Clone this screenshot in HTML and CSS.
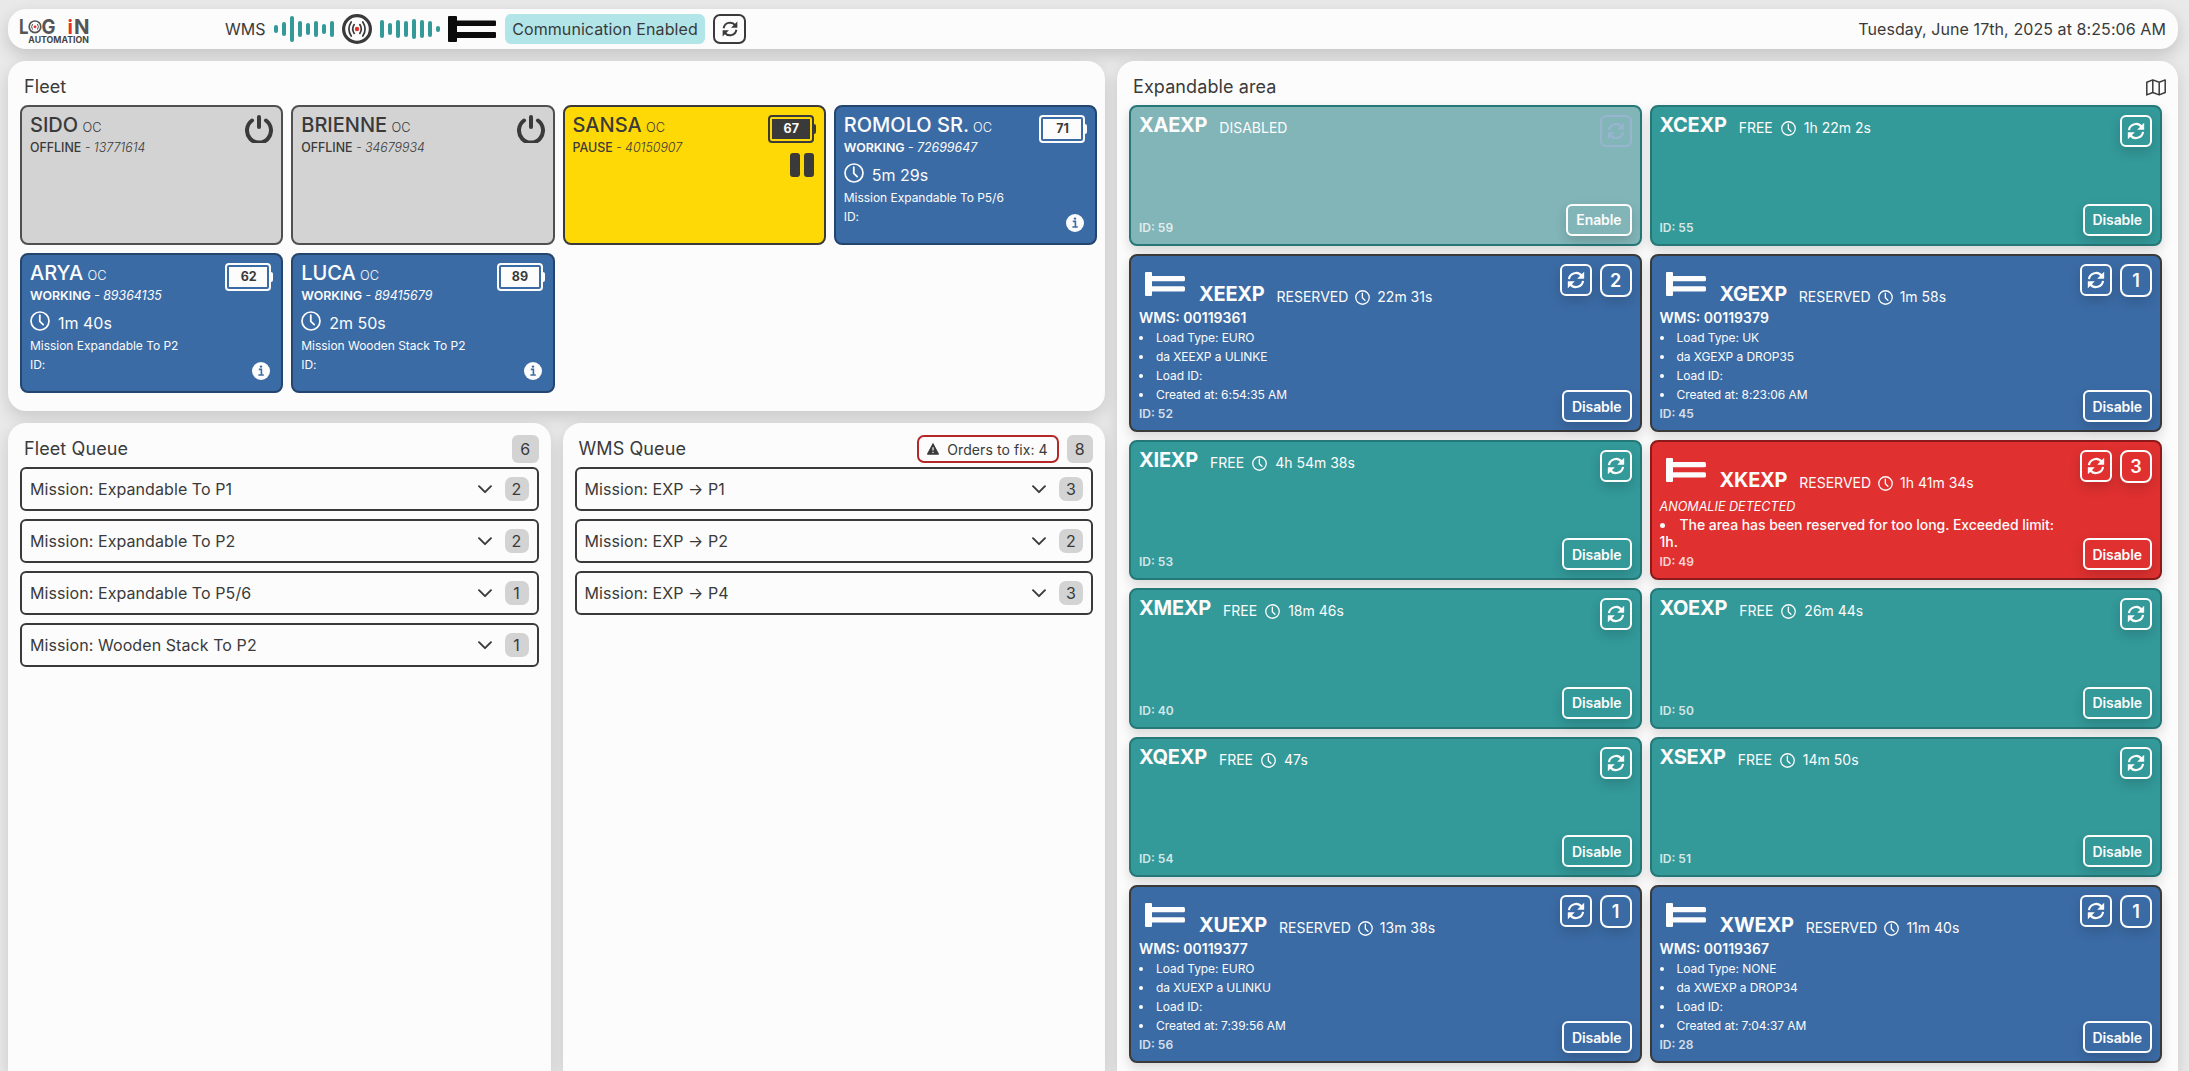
FILE: index.html
```html
<!DOCTYPE html>
<html lang="en">
<head>
    <meta charset="UTF-8">
    <meta name="viewport" content="width=device-width, initial-scale=1.0">
    <title>Log In Automation</title>
    <link rel="stylesheet" href="styles.css">
</head>
<body>
    <!-- shared icons -->
    <svg class="sprite" width="0" height="0">
        <symbol id="refresh" viewBox="0 0 24 24">
            <path d="M3.5 11A8.6 8.6 0 0 1 19 7.2M20.5 13A8.6 8.6 0 0 1 5 16.8" fill="none" stroke="currentColor" stroke-width="2.6"/>
            <path d="M21.8 2v8.4h-8.4zM2.2 22v-8.4h8.4z" fill="currentColor"/>
        </symbol>
        <symbol id="clock" viewBox="0 0 20 20">
            <circle cx="10" cy="10" r="9" fill="none" stroke="currentColor" stroke-width="1.7"/>
            <path d="M9.8 4.2v6.2l3.4 3.2" fill="none" stroke="currentColor" stroke-width="1.8" stroke-linecap="round"/>
        </symbol>
        <symbol id="power" viewBox="0 0 28 28">
            <path d="M7 5.5a12 12.2 0 1 0 14 0" fill="none" stroke="currentColor" stroke-width="4" stroke-linecap="round"/>
            <path d="M14 2v10" stroke="currentColor" stroke-width="4" stroke-linecap="round"/>
        </symbol>
        <symbol id="info" viewBox="0 0 18 18">
            <circle cx="9" cy="9" r="9" fill="#fcfcfc"/>
            <path d="M6.8 7.4h2.6v5.4M6.4 13h5.4" fill="none" stroke="#3b6ba5" stroke-width="1.6"/>
            <circle cx="9" cy="4.6" r="1.2" fill="#3b6ba5"/>
        </symbol>
        <symbol id="chevron" viewBox="0 0 14 9">
            <path d="M1 1.2l6 6 6-6" fill="none" stroke="currentColor" stroke-width="1.9" stroke-linecap="round" stroke-linejoin="round"/>
        </symbol>
        <symbol id="fork" viewBox="0 0 40 24">
            <rect x="0" y="0" width="7" height="24" rx="1"/>
            <rect x="6" y="4" width="34" height="5.2" rx="1.5"/>
            <rect x="6" y="14.2" width="34" height="5.2" rx="1.5"/>
        </symbol>
    </svg>

    <header class="topbar">
        <svg class="logo" viewBox="0 0 72 32">
            <text class="logo-top" x="-1" y="20.7" textLength="9.5" lengthAdjust="spacingAndGlyphs">L</text>
            <circle cx="15" cy="13.8" r="5.8" fill="none" stroke="#555" stroke-width="1.7"/>
            <path d="M12.6 11q-2 2.8 0 5.6M17.4 11q2 2.8 0 5.6" fill="none" stroke="#555" stroke-width="1"/>
            <circle cx="15" cy="13.8" r="1.4" fill="#e03030"/>
            <text class="logo-top" x="21.5" y="20.7" textLength="14" lengthAdjust="spacingAndGlyphs">G</text>
            <text class="logo-top logo-red" x="47.5" y="20.7">i</text>
            <text class="logo-top" x="54" y="20.7" textLength="15.5" lengthAdjust="spacingAndGlyphs">N</text>
            <text class="logo-sub" x="8.3" y="30.4" textLength="60.5" lengthAdjust="spacingAndGlyphs">AUTOMATION</text>
        </svg>
        <div class="comm">
            <span class="comm-label">WMS</span>
            <svg class="wave" width="60" height="30" viewBox="0 0 60 30">
                <rect x="0" y="11" width="4" height="8" rx="2"/>
                <rect x="8" y="8" width="4" height="14" rx="2"/>
                <rect x="16" y="2" width="4" height="26" rx="2"/>
                <rect x="24" y="7" width="4" height="16" rx="2"/>
                <rect x="32" y="9" width="4" height="12" rx="2"/>
                <rect x="40" y="7" width="4" height="16" rx="2"/>
                <rect x="48" y="10" width="4" height="10" rx="2"/>
                <rect x="56" y="7" width="4" height="16" rx="2"/>
            </svg>
            <svg width="30" height="30" viewBox="0 0 30 30" fill="none" stroke="#3a3a3a">
                <circle cx="15" cy="15" r="13.4" stroke-width="3.2"/>
                <path d="M9.2 8q-4.6 7 0 14M20.8 8q4.6 7 0 14M12.2 10.6q-3 4.4 0 8.8M17.8 10.6q3 4.4 0 8.8" stroke-width="1.7" stroke-linecap="round"/>
                <circle cx="15" cy="15" r="2.2" fill="#e03030" stroke="none"/>
            </svg>
            <svg class="wave" width="60" height="30" viewBox="0 0 60 30">
                <rect x="0" y="6" width="4" height="18" rx="2"/>
                <rect x="8" y="9" width="4" height="12" rx="2"/>
                <rect x="16" y="6" width="4" height="18" rx="2"/>
                <rect x="24" y="7" width="4" height="16" rx="2"/>
                <rect x="32" y="5" width="4" height="20" rx="2"/>
                <rect x="40" y="6" width="4" height="18" rx="2"/>
                <rect x="48" y="7" width="4" height="16" rx="2"/>
                <rect x="56" y="12" width="4" height="6" rx="2"/>
            </svg>
            <svg class="comm-fork" width="48" height="26" viewBox="0 0 48 26">
                <rect x="0" y="0" width="9" height="26" rx="1"/>
                <rect x="8" y="4.5" width="40" height="5.5" rx="1"/>
                <rect x="8" y="16" width="40" height="6" rx="1"/>
            </svg>
            <span class="comm-status">Communication Enabled</span>
            <button class="sync-btn"><svg width="18" height="18"><use href="#refresh"/></svg></button>
        </div>
        <div class="date">Tuesday, June 17th, 2025 at 8:25:06 AM</div>
    </header>

    <main class="layout">
        <div class="left">
            <section class="panel fleet">
                <div class="panel-head"><h2>Fleet</h2></div>
                <div class="fleet-grid">
                    <div class="robot offline">
                        <div class="robot-name">SIDO <small>OC</small></div>
                        <div class="robot-status">OFFLINE <i>- 13771614</i></div>
                        <div class="robot-side"><svg width="28" height="28"><use href="#power"/></svg></div>
                    </div>
                    <div class="robot offline">
                        <div class="robot-name">BRIENNE <small>OC</small></div>
                        <div class="robot-status">OFFLINE <i>- 34679934</i></div>
                        <div class="robot-side"><svg width="28" height="28"><use href="#power"/></svg></div>
                    </div>
                    <div class="robot paused">
                        <div class="robot-name">SANSA <small>OC</small></div>
                        <div class="robot-status">PAUSE <i>- 40150907</i></div>
                        <div class="robot-side">
                            <div class="battery"><span>67</span></div>
                            <div class="pause"></div>
                        </div>
                    </div>
                    <div class="robot working">
                        <div class="robot-name">ROMOLO SR. <small>OC</small></div>
                        <div class="robot-status">WORKING <i>- 72699647</i></div>
                        <div class="robot-time"><svg width="20" height="20"><use href="#clock"/></svg>5m 29s</div>
                        <div class="robot-mission">Mission Expandable To P5/6</div>
                        <div class="robot-mission">ID:</div>
                        <div class="robot-side"><div class="battery"><span>71</span></div></div>
                        <svg class="robot-info" width="18" height="18"><use href="#info"/></svg>
                    </div>
                    <div class="robot working">
                        <div class="robot-name">ARYA <small>OC</small></div>
                        <div class="robot-status">WORKING <i>- 89364135</i></div>
                        <div class="robot-time"><svg width="20" height="20"><use href="#clock"/></svg>1m 40s</div>
                        <div class="robot-mission">Mission Expandable To P2</div>
                        <div class="robot-mission">ID:</div>
                        <div class="robot-side"><div class="battery"><span>62</span></div></div>
                        <svg class="robot-info" width="18" height="18"><use href="#info"/></svg>
                    </div>
                    <div class="robot working">
                        <div class="robot-name">LUCA <small>OC</small></div>
                        <div class="robot-status">WORKING <i>- 89415679</i></div>
                        <div class="robot-time"><svg width="20" height="20"><use href="#clock"/></svg>2m 50s</div>
                        <div class="robot-mission">Mission Wooden Stack To P2</div>
                        <div class="robot-mission">ID:</div>
                        <div class="robot-side"><div class="battery"><span>89</span></div></div>
                        <svg class="robot-info" width="18" height="18"><use href="#info"/></svg>
                    </div>
                </div>
            </section>

            <div class="queues">
                <section class="panel queue">
                    <div class="panel-head"><h2>Fleet Queue</h2><span class="total">6</span></div>
                    <div class="missions">
                        <div class="mission"><span>Mission: Expandable To P1</span><svg width="14" height="9"><use href="#chevron"/></svg><b>2</b></div>
                        <div class="mission"><span>Mission: Expandable To P2</span><svg width="14" height="9"><use href="#chevron"/></svg><b>2</b></div>
                        <div class="mission"><span>Mission: Expandable To P5/6</span><svg width="14" height="9"><use href="#chevron"/></svg><b>1</b></div>
                        <div class="mission"><span>Mission: Wooden Stack To P2</span><svg width="14" height="9"><use href="#chevron"/></svg><b>1</b></div>
                    </div>
                </section>
                <section class="panel queue">
                    <div class="panel-head">
                        <h2>WMS Queue</h2>
                        <button class="fix-btn">
                            <svg width="12" height="12" viewBox="0 0 12 12"><path d="M6 .6 11.6 11.2H.4z" fill="#3a3a3a" stroke="#3a3a3a" stroke-linejoin="round"/><path d="M6 4.2v3.4M6 8.8v1.3" stroke="#fcfcfc" stroke-width="1.2"/></svg>
                            Orders to fix: 4
                        </button>
                        <span class="total">8</span>
                    </div>
                    <div class="missions">
                        <div class="mission"><span>Mission: EXP → P1</span><svg width="14" height="9"><use href="#chevron"/></svg><b>3</b></div>
                        <div class="mission"><span>Mission: EXP → P2</span><svg width="14" height="9"><use href="#chevron"/></svg><b>2</b></div>
                        <div class="mission"><span>Mission: EXP → P4</span><svg width="14" height="9"><use href="#chevron"/></svg><b>3</b></div>
                    </div>
                </section>
            </div>
        </div>

        <section class="panel areas">
            <div class="panel-head">
                <h2>Expandable area</h2>
                <svg class="map" width="20" height="17" viewBox="0 0 20 17" fill="none" stroke="#3a3a3a" stroke-width="1.5" stroke-linejoin="round"><path d="M.8 3.2 6.8.9l6.4 2.3 6-2.3v12.6l-6 2.4-6.4-2.4-6 2.4zM6.8.9v12.6M13.2 3.2v12.7"/></svg>
            </div>
            <div class="area-grid">
                <div class="area disabled">
                    <div class="area-head"><strong>XAEXP</strong><span>DISABLED</span></div>
                    <div class="area-id">ID: 59</div>
                    <div class="area-tools"><button class="icon-btn"><svg width="20" height="20"><use href="#refresh"/></svg></button></div>
                    <button class="toggle">Enable</button>
                </div>
                <div class="area free">
                    <div class="area-head"><strong>XCEXP</strong><span>FREE</span><svg width="15" height="15"><use href="#clock"/></svg><span>1h 22m 2s</span></div>
                    <div class="area-id">ID: 55</div>
                    <div class="area-tools"><button class="icon-btn"><svg width="20" height="20"><use href="#refresh"/></svg></button></div>
                    <button class="toggle">Disable</button>
                </div>

                <div class="area reserved">
                    <div class="area-head"><svg class="fork" width="40" height="24"><use href="#fork"/></svg><strong>XEEXP</strong><span>RESERVED</span><svg width="15" height="15"><use href="#clock"/></svg><span>22m 31s</span></div>
                    <div class="area-wms">WMS: 00119361</div>
                    <ul>
                        <li>Load Type: EURO</li>
                        <li>da XEEXP a ULINKE</li>
                        <li>Load ID:</li>
                        <li>Created at: 6:54:35 AM</li>
                    </ul>
                    <div class="area-id">ID: 52</div>
                    <div class="area-tools"><button class="icon-btn"><svg width="20" height="20"><use href="#refresh"/></svg></button><button class="count">2</button></div>
                    <button class="toggle">Disable</button>
                </div>
                <div class="area reserved">
                    <div class="area-head"><svg class="fork" width="40" height="24"><use href="#fork"/></svg><strong>XGEXP</strong><span>RESERVED</span><svg width="15" height="15"><use href="#clock"/></svg><span>1m 58s</span></div>
                    <div class="area-wms">WMS: 00119379</div>
                    <ul>
                        <li>Load Type: UK</li>
                        <li>da XGEXP a DROP35</li>
                        <li>Load ID:</li>
                        <li>Created at: 8:23:06 AM</li>
                    </ul>
                    <div class="area-id">ID: 45</div>
                    <div class="area-tools"><button class="icon-btn"><svg width="20" height="20"><use href="#refresh"/></svg></button><button class="count">1</button></div>
                    <button class="toggle">Disable</button>
                </div>

                <div class="area free">
                    <div class="area-head"><strong>XIEXP</strong><span>FREE</span><svg width="15" height="15"><use href="#clock"/></svg><span>4h 54m 38s</span></div>
                    <div class="area-id">ID: 53</div>
                    <div class="area-tools"><button class="icon-btn"><svg width="20" height="20"><use href="#refresh"/></svg></button></div>
                    <button class="toggle">Disable</button>
                </div>
                <div class="area anomaly">
                    <div class="area-head"><svg class="fork" width="40" height="24"><use href="#fork"/></svg><strong>XKEXP</strong><span>RESERVED</span><svg width="15" height="15"><use href="#clock"/></svg><span>1h 41m 34s</span></div>
                    <div class="anomaly-title">ANOMALIE DETECTED</div>
                    <div class="anomaly-text">The area has been reserved for too long. Exceeded limit: 1h.</div>
                    <div class="area-id">ID: 49</div>
                    <div class="area-tools"><button class="icon-btn"><svg width="20" height="20"><use href="#refresh"/></svg></button><button class="count">3</button></div>
                    <button class="toggle">Disable</button>
                </div>

                <div class="area free">
                    <div class="area-head"><strong>XMEXP</strong><span>FREE</span><svg width="15" height="15"><use href="#clock"/></svg><span>18m 46s</span></div>
                    <div class="area-id">ID: 40</div>
                    <div class="area-tools"><button class="icon-btn"><svg width="20" height="20"><use href="#refresh"/></svg></button></div>
                    <button class="toggle">Disable</button>
                </div>
                <div class="area free">
                    <div class="area-head"><strong>XOEXP</strong><span>FREE</span><svg width="15" height="15"><use href="#clock"/></svg><span>26m 44s</span></div>
                    <div class="area-id">ID: 50</div>
                    <div class="area-tools"><button class="icon-btn"><svg width="20" height="20"><use href="#refresh"/></svg></button></div>
                    <button class="toggle">Disable</button>
                </div>

                <div class="area free">
                    <div class="area-head"><strong>XQEXP</strong><span>FREE</span><svg width="15" height="15"><use href="#clock"/></svg><span>47s</span></div>
                    <div class="area-id">ID: 54</div>
                    <div class="area-tools"><button class="icon-btn"><svg width="20" height="20"><use href="#refresh"/></svg></button></div>
                    <button class="toggle">Disable</button>
                </div>
                <div class="area free">
                    <div class="area-head"><strong>XSEXP</strong><span>FREE</span><svg width="15" height="15"><use href="#clock"/></svg><span>14m 50s</span></div>
                    <div class="area-id">ID: 51</div>
                    <div class="area-tools"><button class="icon-btn"><svg width="20" height="20"><use href="#refresh"/></svg></button></div>
                    <button class="toggle">Disable</button>
                </div>

                <div class="area reserved">
                    <div class="area-head"><svg class="fork" width="40" height="24"><use href="#fork"/></svg><strong>XUEXP</strong><span>RESERVED</span><svg width="15" height="15"><use href="#clock"/></svg><span>13m 38s</span></div>
                    <div class="area-wms">WMS: 00119377</div>
                    <ul>
                        <li>Load Type: EURO</li>
                        <li>da XUEXP a ULINKU</li>
                        <li>Load ID:</li>
                        <li>Created at: 7:39:56 AM</li>
                    </ul>
                    <div class="area-id">ID: 56</div>
                    <div class="area-tools"><button class="icon-btn"><svg width="20" height="20"><use href="#refresh"/></svg></button><button class="count">1</button></div>
                    <button class="toggle">Disable</button>
                </div>
                <div class="area reserved">
                    <div class="area-head"><svg class="fork" width="40" height="24"><use href="#fork"/></svg><strong>XWEXP</strong><span>RESERVED</span><svg width="15" height="15"><use href="#clock"/></svg><span>11m 40s</span></div>
                    <div class="area-wms">WMS: 00119367</div>
                    <ul>
                        <li>Load Type: NONE</li>
                        <li>da XWEXP a DROP34</li>
                        <li>Load ID:</li>
                        <li>Created at: 7:04:37 AM</li>
                    </ul>
                    <div class="area-id">ID: 28</div>
                    <div class="area-tools"><button class="icon-btn"><svg width="20" height="20"><use href="#refresh"/></svg></button><button class="count">1</button></div>
                    <button class="toggle">Disable</button>
                </div>
            </div>
        </section>
    </main>
</body>
</html>
```
FILE: styles.css
```css
* {
    box-sizing: border-box;
}
body {
    margin: 0;
    padding: 9px 11px 0 8px;
    height: 100vh;
    overflow: hidden;
    display: flex;
    flex-direction: column;
    gap: 12px;
    background-color: #e9e9e9;
    color: #3a3a3a;
    font-family: Inter, "Liberation Sans", sans-serif;
    font-size: 16px;
}
h2 {
    margin: 0;
    font-size: 18px;
    font-weight: 400;
    letter-spacing: 0.1px;
}
button {
    font-family: inherit;
    color: inherit;
    background: none;
    padding: 0;
    display: flex;
    align-items: center;
    justify-content: center;
}
svg {
    flex-shrink: 0;
}
.sprite {
    position: absolute;
}

/* top bar */
.topbar {
    height: 40px;
    flex-shrink: 0;
    display: flex;
    align-items: center;
    padding: 0 12px;
    border-radius: 18px;
    background-color: #fcfcfc;
    box-shadow: 0 6px 16px rgba(0, 0, 0, 0.16);
}
.logo {
    width: 72px;
    height: 32px;
    overflow: visible;
}
.logo-top {
    font-size: 20px;
    font-weight: 700;
    fill: #555;
}
.logo-red {
    fill: #e03030;
}
.logo-sub {
    font-size: 8.5px;
    font-weight: 700;
    fill: #444;
}
.comm {
    display: flex;
    align-items: center;
    gap: 8px;
    margin-left: 133px;
}
.comm-label {
    width: 41px;
}
.wave {
    fill: #339999;
}
.comm-fork {
    fill: #0c0c0c;
}
.comm-status {
    width: 200px;
    height: 30px;
    line-height: 30px;
    margin-left: 1px;
    text-align: center;
    white-space: nowrap;
    letter-spacing: 0.08px;
    border-radius: 6px;
    background-color: #b2e5e7;
}
.sync-btn {
    width: 33px;
    height: 30px;
    border: 2px solid #3a3a3a;
    border-radius: 7px;
}
.date {
    margin-left: auto;
    letter-spacing: 0.08px;
}

/* panels */
.layout {
    flex: 1;
    min-height: 0;
    display: flex;
    gap: 12px;
}
.left {
    width: 1097px;
    display: flex;
    flex-direction: column;
    gap: 12px;
}
.panel {
    background-color: #fcfcfc;
    border-radius: 18px;
    box-shadow: 0 6px 16px rgba(0, 0, 0, 0.14);
}
.panel-head {
    height: 44px;
    display: flex;
    align-items: center;
    gap: 8px;
    padding: 8px 0 0 4px;
}
.panel-head h2 {
    flex: 1;
    padding-bottom: 1px;
}

/* fleet */
.fleet {
    height: 350px;
    padding: 0 8px 0 12px;
}
.fleet-grid {
    display: grid;
    grid-template-columns: repeat(4, 1fr);
    grid-auto-rows: 140px;
    gap: 8px;
}
.robot {
    position: relative;
    padding: 6px 8px;
    border: 2px solid;
    border-radius: 8px;
}
.robot.offline {
    background-color: #d3d3d3;
    border-color: #505050;
}
.robot.paused {
    background-color: #ffd905;
    border-color: #3a3a3a;
}
.robot.working {
    background-color: #3b6ba5;
    border-color: #24456e;
    color: #fcfcfc;
}
.robot-name {
    font-size: 20px;
    line-height: 24px;
    font-weight: 500;
}
.robot-name small {
    margin-left: -1px;
    font-size: 12.8px;
    font-weight: 300;
}
.robot-status {
    font-size: 12.4px;
    line-height: 16px;
    font-weight: 500;
}
.working .robot-status {
    font-weight: 600;
}
.robot-status i {
    font-weight: 300;
}
.working .robot-status i {
    font-weight: 400;
}
.robot-time {
    display: flex;
    gap: 8px;
    margin-top: 7px;
    height: 26px;
    line-height: 24px;
}
.robot-mission {
    font-size: 12px;
    line-height: 19px;
    letter-spacing: -0.03px;
}
.robot-mission:nth-child(4) {
    margin-top: -1px;
}
.robot-side {
    position: absolute;
    top: 8px;
    right: 8px;
    display: flex;
    flex-direction: column;
    align-items: flex-end;
    gap: 10px;
}
.battery {
    position: relative;
    width: 46px;
    height: 28px;
    margin-right: 2px;
    padding: 2px;
    border: 2px solid #fcfcfc;
    border-radius: 4px;
}
.battery::after {
    content: "";
    position: absolute;
    right: -4px;
    top: 7px;
    width: 2px;
    height: 10px;
    border-radius: 0 2px 2px 0;
    background-color: #fcfcfc;
}
.battery span {
    display: block;
    height: 20px;
    line-height: 20px;
    padding-left: 1px;
    text-align: center;
    font-size: 12.5px;
    font-weight: 700;
    color: #3a3a3a;
    background-color: #fcfcfc;
}
.paused .battery {
    border-color: #3a3a3a;
}
.paused .battery::after {
    background-color: #3a3a3a;
}
.paused .battery span {
    color: #fcfcfc;
    background-color: #3a3a3a;
}
.pause {
    width: 24px;
    height: 24px;
    margin-right: 2px;
    display: flex;
    justify-content: space-between;
}
.pause::before,
.pause::after {
    content: "";
    width: 10px;
    border-radius: 3px;
    background-color: #3a3a3a;
}
.robot-info {
    position: absolute;
    right: 11px;
    bottom: 11px;
}

/* queues */
.queues {
    flex: 1;
    display: flex;
    gap: 12px;
}
.queue {
    flex: 1;
    padding: 0 12px;
    border-radius: 18px 18px 0 0;
}
.total {
    width: 26.5px;
    height: 28px;
    line-height: 28px;
    text-align: center;
    border-radius: 6px;
    background-color: #d3d3d3;
}
.fix-btn {
    gap: 8px;
    width: 142px;
    height: 28px;
    border: 2px solid #b52828;
    border-radius: 7px;
    font-size: 14px;
    letter-spacing: 0.08px;
}
.missions {
    display: flex;
    flex-direction: column;
    gap: 8px;
}
.mission {
    height: 44px;
    display: flex;
    align-items: center;
    padding: 0 8px;
    border: 2px solid #3a3a3a;
    border-radius: 6px;
    letter-spacing: 0.08px;
}
.mission span {
    flex: 1;
}
.mission b {
    width: 24px;
    height: 24px;
    line-height: 24px;
    margin-left: 13px;
    text-align: center;
    font-weight: 400;
    border-radius: 7px;
    background-color: #d3d3d3;
}

/* expandable area */
.areas {
    flex: 1;
    padding: 0 12px;
    border-radius: 18px 18px 0 0;
}
.area-grid {
    display: grid;
    grid-template-columns: 1fr 1fr;
    grid-template-rows: 140.5px 178.5px 140.2px 140.4px 140.6px 178px;
    gap: 8px;
    padding-right: 4px;
}
.area {
    position: relative;
    display: flex;
    flex-direction: column;
    padding: 6px 8px 7px;
    border: 2px solid;
    border-radius: 8px;
    color: #fcfcfc;
    box-shadow: 0 5px 12px rgba(0, 0, 0, 0.15);
}
.area.free {
    background-color: #339999;
    border-color: #267878;
}
.area.disabled {
    background-color: #82b5b8;
    border-color: #267878;
}
.area.reserved {
    background-color: #3b6ba5;
    border-color: #3a3a3a;
}
.area.anomaly {
    background-color: #e03030;
    border-color: #8c1a1a;
}
.area-head {
    display: flex;
    align-items: flex-start;
    font-size: 14px;
    line-height: 24px;
}
.area-head strong {
    font-size: 20px;
    font-weight: 700;
    letter-spacing: -0.25px;
    margin-right: 12px;
}
.area-head span {
    padding-top: 3px;
}
.area-head svg {
    margin: 8px 8px 0 8px;
}
.area-head .fork {
    fill: #fcfcfc;
    margin: 10px 14px 0 6px;
}
.reserved .area-head,
.anomaly .area-head {
    height: 46px;
}
.reserved .area-head strong,
.anomaly .area-head strong {
    padding-top: 20px;
}
.reserved .area-head span,
.anomaly .area-head span {
    padding-top: 23px;
}
.reserved .area-head .fork ~ svg,
.anomaly .area-head .fork ~ svg {
    margin: 28px 7px 0 7px;
}
.area-wms {
    font-size: 14px;
    line-height: 20px;
    font-weight: 600;
}
.area ul {
    margin: 0;
    padding: 0;
    list-style-position: inside;
    font-size: 12px;
    line-height: 19px;
    letter-spacing: -0.07px;
}
.area-id {
    margin-top: auto;
    font-size: 12px;
    line-height: 18px;
    font-weight: 600;
    opacity: 0.8;
}
.area-tools {
    position: absolute;
    top: 8px;
    right: 8px;
    display: flex;
    gap: 8px;
}
.icon-btn,
.count,
.toggle {
    height: 32px;
    border: 2px solid #fcfcfc;
    border-radius: 6px;
    box-shadow: 0 5px 12px rgba(0, 0, 0, 0.15);
}
.icon-btn {
    width: 32px;
}
.count {
    width: 32px;
    height: 33px;
    border-radius: 8px;
    font-size: 18px;
    font-weight: 600;
}
.toggle {
    position: absolute;
    right: 8px;
    bottom: 8px;
    padding: 0 8px;
    font-size: 14px;
    font-weight: 600;
    letter-spacing: -0.1px;
}
.disabled .icon-btn {
    color: #98b4cf;
    border-color: #98b4cf;
    box-shadow: none;
}
.anomaly-title {
    margin-top: 4px;
    font-size: 12.6px;
    line-height: 18px;
    font-style: italic;
}
.anomaly-text {
    display: list-item;
    list-style: disc inside;
    max-width: 400px;
    font-size: 14px;
    line-height: 17px;
    font-weight: 500;
    letter-spacing: -0.05px;
}
```
